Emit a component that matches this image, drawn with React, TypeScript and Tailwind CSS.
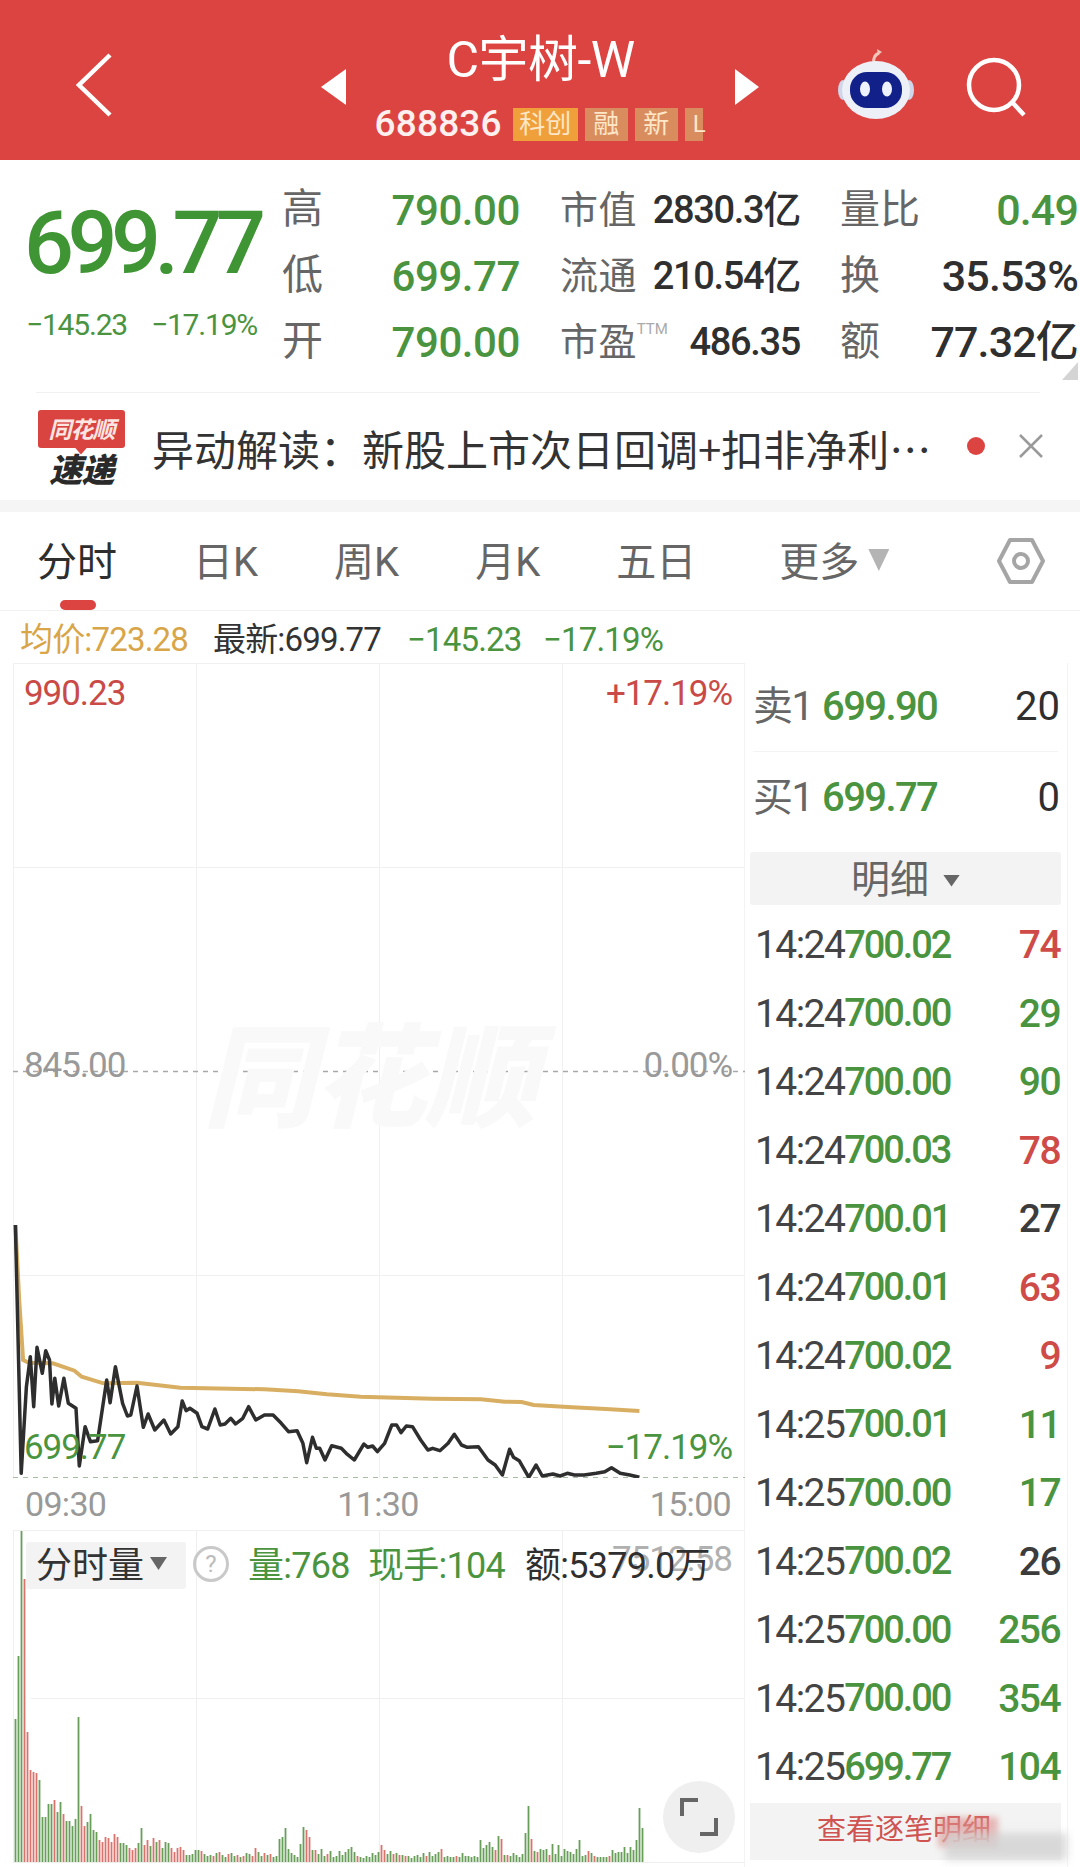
const NUM = "font-['Roboto','Noto_Sans_CJK_SC',sans-serif]";

const blackLine = [
  [32, 75], [44, 820], [55, 560], [63, 470], [70, 620], [77, 442], [88, 520], [95, 452], [103, 480], [108, 612],
  [114, 535], [122, 618], [133, 535], [142, 610], [158, 625], [165, 798], [177, 680], [188, 725], [203, 722],
  [222, 540], [229, 608], [240, 500], [255, 610], [265, 648], [272, 645], [285, 558], [298, 682], [308, 642],
  [322, 690], [341, 660], [355, 702], [370, 680], [379, 603], [387, 632], [395, 625], [410, 640], [420, 680],
  [432, 687], [447, 627], [458, 675], [468, 672], [480, 655], [490, 672], [505, 655], [517, 620], [532, 660],
  [550, 645], [568, 645], [585, 670], [600, 695], [618, 692], [630, 730], [638, 788], [650, 712], [658, 745],
  [665, 745], [676, 780], [690, 737], [710, 745], [720, 760], [737, 780], [757, 732], [765, 742], [775, 738],
  [785, 755], [800, 730], [815, 675], [825, 675], [834, 698], [845, 678], [858, 680], [875, 720], [890, 750],
  [900, 745], [915, 752], [932, 730], [945, 703], [960, 735], [972, 742], [995, 740], [1015, 780], [1030, 795],
  [1045, 825], [1060, 748], [1068, 772], [1080, 782], [1100, 832], [1115, 795], [1128, 828], [1150, 822],
  [1165, 828], [1180, 820], [1195, 825], [1215, 825], [1240, 820], [1258, 815], [1272, 803], [1290, 820],
  [1310, 825], [1330, 832],
];

const goldLine = [
  [32, 75], [40, 300], [48, 480], [60, 488], [110, 490], [155, 512], [170, 530], [215, 550], [285, 548], [375, 563],
  [550, 568], [620, 574], [680, 583], [750, 590], [900, 596], [1000, 598], [1050, 605], [1085, 606], [1110, 615],
  [1190, 622], [1260, 627], [1330, 633],
];

// traced from the crop: x / 2.08, y / 3 + 1200, then moved into the chart box
const toPoints = (line: number[][]) =>
  line.map(([x, y]) => `${(x / 2.08 - 13).toFixed(1)},${(y / 3 + 537).toFixed(1)}`).join(" ");

// negative = red bar
const volumes = [
  143, 206, 336, -283, -130, -92, -90, -89, 82, 45, 45, 58, 58, -62, 50, 60, -48, 41, 41, 36, 43, 145, -56, -36, 40,
  48, 32, 30, -22, -20, -25, -24, -20, -28, -25, 19, 19, 17, -14, -12, -14, 19, 34, -17, -22, 16, -24, 20, -22, 14,
  20, 19, -14, -10, -14, -15, -12, 7, 7, 8, 12, 12, -11, 8, 6, 7, -6, 9, -10, 7, 5, -8, 9, 6, -7, 5, -6, 9, 8, -6,
  -14, 10, 6, -9, 7, -8, 5, 6, 23, 25, 34, 13, 9, 7, 5, 18, 35, -32, -25, 12, -12, 8, 13, 6, -8, 11, 5, 6, 11, 7, 10,
  13, 15, 10, -6, 5, 4, 6, 5, 9, 7, 10, -17, -12, 8, 11, -8, 9, -7, 7, -6, 6, 4, 6, 7, 5, 9, -6, 10, 6, 8, 10, -13, 5,
  6, 5, 5, -6, 5, 9, 6, 6, 5, 6, 5, 22, 14, 17, 20, 15, -12, 26, -23, 7, -7, 6, 9, 7, 5, 8, 29, 56, -23, 11, -10, 13,
  12, 13, -7, 18, 8, 17, 6, 13, 11, 10, 8, 13, 22, 6, 7, -11, 9, -6, 5, 5, 5, 5, -6, 12, 9, 10, 10, 15, 9, 15, 12, 22,
  54, 34,
];

const ticks = [
  ["14:24", "700.02", "74", "r"],
  ["14:24", "700.00", "29", "g"],
  ["14:24", "700.00", "90", "g"],
  ["14:24", "700.03", "78", "r"],
  ["14:24", "700.01", "27", "k"],
  ["14:24", "700.01", "63", "r"],
  ["14:24", "700.02", "9", "r"],
  ["14:25", "700.01", "11", "g"],
  ["14:25", "700.00", "17", "g"],
  ["14:25", "700.02", "26", "k"],
  ["14:25", "700.00", "256", "g"],
  ["14:25", "700.00", "354", "g"],
  ["14:25", "699.77", "104", "g"],
];

const qtyColor: Record<string, string> = {
  r: "text-[#cf4b47]",
  g: "text-[#4a9440]",
  k: "text-[#3c3c3c]",
};

const stats = [
  { label: "高", value: "790.00", label2: "市值", value2: "2830.3亿", label3: "量比", value3: "0.49", green3: true },
  { label: "低", value: "699.77", label2: "流通", value2: "210.54亿", label3: "换", value3: "35.53%" },
  { label: "开", value: "790.00", label2: "市盈", sup: "TTM", value2: "486.35", label3: "额", value3: "77.32亿" },
];

function RobotIcon() {
  return (
    <svg width="78" height="72" viewBox="0 0 78 72" className="mt-[-6px]">
      <path d="M37 16c-1-5 0-9 5-11" fill="none" stroke="#f3c4b8" strokeWidth="3" />
      <path d="M40 1l5 3-4 3z" fill="#f3c4b8" />
      <ellipse cx="6" cy="42" rx="5" ry="10" fill="#cfd6ea" />
      <ellipse cx="72" cy="42" rx="5" ry="10" fill="#cfd6ea" />
      <ellipse cx="39" cy="42" rx="34" ry="29" fill="#eef0f8" />
      <rect x="13" y="24" width="52" height="36" rx="17" fill="#12218a" />
      <ellipse cx="28" cy="41" rx="5" ry="7.5" fill="#eef2ff" />
      <ellipse cx="50" cy="41" rx="5" ry="7.5" fill="#eef2ff" />
    </svg>
  );
}

function SearchIcon() {
  return (
    <svg width="62" height="60" viewBox="0 0 62 60" fill="none" stroke="white" strokeWidth="4.5">
      <circle cx="29" cy="28" r="25" />
      <path d="M47 45l12 13" />
    </svg>
  );
}

function Header() {
  return (
    <div className="h-[160px] shrink-0 bg-[#dc4442] flex items-center text-white">
      <div className="w-[321px] pl-[75px] pt-[10px]">
        <svg width="38" height="64" viewBox="0 0 38 64" fill="none" stroke="white" strokeWidth="4.5">
          <path d="M35 2L4 32l31 30" />
        </svg>
      </div>
      <div className="w-[25px] h-[36px] mt-[14px] bg-white [clip-path:polygon(100%_0,100%_100%,0_50%)]" />
      <div className="w-[389px] flex flex-col items-center pt-[11px]">
        <div className={`${NUM} text-[50px] leading-[62px] tracking-[-0.01em]`}>C宇树-W</div>
        <div className="flex items-center w-[336px] h-[36px] mt-[15px] pl-[2px] overflow-hidden">
          <span className={`${NUM} text-[37px] font-medium tracking-[0.005em] text-[#fdf0ee] mr-[11px]`}>688836</span>
          <span className={`${NUM} w-[65px] h-[33px] shrink-0 flex items-center justify-center bg-[#f0a03a] text-[26px] text-[#fde7c8] mr-[7px]`}>科创</span>
          <span className={`${NUM} w-[43px] h-[33px] shrink-0 flex items-center justify-center bg-[#d98d5e] text-[26px] text-[#fde7c8] mr-[7px]`}>融</span>
          <span className={`${NUM} w-[43px] h-[33px] shrink-0 flex items-center justify-center bg-[#d98d5e] text-[26px] text-[#fde7c8] mr-[7px]`}>新</span>
          <span className={`${NUM} w-[18px] h-[33px] shrink-0 flex items-center bg-[#d98d5e] text-[24px] pl-[8px] text-[#fde7c8]`}>L</span>
        </div>
      </div>
      <div className="w-[24px] h-[36px] mt-[14px] bg-white [clip-path:polygon(0_0,100%_50%,0_100%)]" />
      <div className="ml-[78px] mt-[14px]">
        <RobotIcon />
      </div>
      <div className="ml-[50px] mt-[14px]">
        <SearchIcon />
      </div>
    </div>
  );
}

function Quote() {
  return (
    <div className={`${NUM} relative h-[232px] shrink-0 flex`}>
      <div className="w-[282px] pl-[24px] pt-[38px]">
        <div className="text-[88px] leading-[90px] font-medium text-[#3f9434] tracking-[-0.074em]">699.77</div>
        <div className="flex text-[30px] leading-[36px] mt-[19px] pl-[2px] text-[#4a9440] tracking-[-0.04em]">
          <span className="w-[125px]">−145.23</span>
          <span>−17.19%</span>
        </div>
      </div>
      <div className="flex-1 pt-[17px]">
        {stats.map((s) => (
          <div key={s.label} className="flex items-center h-[66px]">
            <span className="w-[40px] text-[41px] text-[#666]">{s.label}</span>
            <span className="w-[198px] text-[42px] text-right font-medium text-[#4a9440] tracking-[-0.01em]">{s.value}</span>
            <span className="w-[280px] pl-[40px] flex items-center text-[#2f2f2f]">
              <span className="text-[38px] text-[#666] tracking-[0.01em]">{s.label2}</span>
              {s.sup && <span className="text-[15px] text-[#aaa] self-start mt-[4px]">{s.sup}</span>}
              <span className="ml-auto text-[38px] font-medium tracking-[-0.035em]">{s.value2}</span>
            </span>
            <span className="flex-1 pl-[40px] pr-[2px] flex items-center">
              <span className="text-[40px] text-[#666]">{s.label3}</span>
              <span
                className={`ml-auto text-[43px] font-medium tracking-[-0.02em] ${s.green3 ? "text-[#4a9440]" : "text-[#2f2f2f]"}`}
              >
                {s.value3}
              </span>
            </span>
          </div>
        ))}
      </div>
      <div className="absolute right-[2px] bottom-[12px] w-[16px] h-[18px] bg-[#d4d4d4] [clip-path:polygon(100%_0,100%_100%,0_100%)]" />
    </div>
  );
}

function Banner() {
  return (
    <div className="h-[108px] shrink-0 flex items-center relative">
      <div className="absolute top-0 left-[36px] right-[40px] h-[1px] bg-[#f1f1f1]" />
      <div className="w-[87px] ml-[38px] mt-[2px] flex flex-col items-center">
        <div className="relative w-[87px] h-[38px] bg-[#d94440] rounded-[3px] flex items-center justify-center">
          <span className="text-[23px] leading-none font-bold italic text-[#fbe6e2] font-['Noto_Sans_CJK_SC',sans-serif] tracking-[-0.04em]">同花顺</span>
          <div className="absolute bottom-[-7px] left-[36px] w-[14px] h-[8px] bg-[#d94440] [clip-path:polygon(0_0,100%_0,50%_100%)]" />
        </div>
        <span className="text-[33px] leading-[34px] mt-[3px] font-black italic text-[#2a2a2a] font-['Noto_Sans_CJK_SC',sans-serif] tracking-[-0.02em]">速递</span>
      </div>
      <div className="ml-[27px] mt-[3px] w-[786px] text-[42px] leading-[58px] text-[#333] whitespace-nowrap font-['Noto_Sans_CJK_SC',sans-serif]">
        异动解读：新股上市次日回调+扣非净利⋯
      </div>
      <div className="ml-[29px] w-[18px] h-[18px] rounded-full bg-[#dc4442]" />
      <svg width="26" height="26" viewBox="0 0 26 26" className="ml-[33px]" fill="none" stroke="#9a9a9a" strokeWidth="2.5">
        <path d="M2 2l22 22M24 2L2 24" />
      </svg>
    </div>
  );
}

function Tabs() {
  const tabs = [
    { t: "日K", w: "ml-[76px]" },
    { t: "周K", w: "ml-[76px]" },
    { t: "月K", w: "ml-[76px]" },
    { t: "五日", w: "ml-[76px]" },
    { t: "更多", w: "ml-[83px]" },
  ];
  return (
    <div className={`${NUM} relative h-[99px] shrink-0 flex items-center pl-[37px] pt-[4px] border-b border-[#f1f1f1] text-[40px] text-[#666]`}>
      <span className="text-[#2e2e2e]">分时</span>
      {tabs.map((x) => (
        <span key={x.t} className={x.w}>
          {x.t}
        </span>
      ))}
      <div className="w-[21px] h-[22px] ml-[9px] mb-[6px] bg-[#b4b4b4] [clip-path:polygon(0_0,100%_0,50%_100%)]" />
      <svg width="50" height="50" viewBox="0 0 50 50" className="ml-[107px] mb-[4px]" fill="none" stroke="#a5a5a5" strokeWidth="4">
        <path d="M14 4h22l11 21-11 21H14L3 25z" strokeLinejoin="round" />
        <circle cx="25" cy="25" r="7" />
      </svg>
      <div className="absolute left-[60px] bottom-0 w-[36px] h-[10px] rounded-[5px] bg-[#dc4442]" />
    </div>
  );
}

function InfoLine() {
  return (
    <div className={`${NUM} h-[52px] shrink-0 flex items-center pl-[20px] pt-[5px] text-[33px] tracking-[-0.025em]`}>
      <span className="text-[#d8a548] w-[193px]">均价:723.28</span>
      <span className="text-[#333] w-[194px]">最新:699.77</span>
      <span className="text-[#4a9440] w-[136px]">−145.23</span>
      <span className="text-[#4a9440]">−17.19%</span>
    </div>
  );
}

function PriceChart() {
  return (
    <div className={`${NUM} relative h-[815px] text-[35px] tracking-[-0.03em]`}>
      <svg width="732" height="815" viewBox="0 0 732 815" className="absolute inset-0" fill="none">
        <path d="M0 0.5H732M0 204.5H732M0 612.5H732" stroke="#f0f0f0" />
        <path d="M0.5 0V815M183.5 0V815M366.5 0V815M549.5 0V815" stroke="#f0f0f0" />
        <path d="M0 408.5H732" stroke="#a8a8a8" strokeWidth="1.5" strokeDasharray="5 5" />
        <path d="M0 815H732" stroke="#8aa884" strokeWidth="1.5" strokeDasharray="5 5" />
        <polyline points={toPoints(goldLine)} stroke="#d8ae62" strokeWidth="4" />
        <polyline points={toPoints(blackLine)} stroke="#2e2e2e" strokeWidth="3.5" strokeLinejoin="round" />
      </svg>
      <div className="absolute left-[190px] top-[350px] text-[112px] leading-none font-black italic text-[#f9f9f9] font-['Noto_Sans_CJK_SC',sans-serif]">
        同花顺
      </div>
      <span className="absolute left-[11px] top-[5px] text-[#c94a46]">990.23</span>
      <span className="absolute right-[13px] top-[5px] text-[#c94a46]">+17.19%</span>
      <span className="absolute left-[11px] top-[377px] text-[#999]">845.00</span>
      <span className="absolute right-[13px] top-[377px] text-[#999]">0.00%</span>
      <span className="absolute left-[11px] top-[759px] text-[#4a9440]">699.77</span>
      <span className="absolute right-[13px] top-[759px] text-[#4a9440]">−17.19%</span>
    </div>
  );
}

function VolumeChart() {
  return (
    <div className={`${NUM} relative h-[332px] border-t border-[#f0f0f0]`}>
      <svg width="732" height="332" viewBox="0 0 732 332" className="absolute inset-0" fill="none">
        <path d="M0.5 0V332M183.5 0V332M366.5 0V332M549.5 0V332" stroke="#efefef" />
        <path d="M18 167.5H732M0 331.5H732" stroke="#efefef" />
        {volumes.map((v, i) => (
          <rect
            key={i}
            x={1.6 + i * 3}
            y={331 - Math.abs(v)}
            width="1.8"
            height={Math.abs(v)}
            fill={v < 0 ? "#d9736b" : "#679f58"}
          />
        ))}
      </svg>
      <span className="absolute right-[13px] top-[3px] text-[35px] text-[#b0b0b0] tracking-[-0.03em]">7512.58</span>
      <div className="absolute left-[13px] top-[11px] w-[160px] h-[47px] rounded-[3px] bg-[#f3f3f3] flex items-center pl-[10px] text-[36px] text-[#333]">
        分时量
        <div className="w-[17px] h-[13px] ml-[6px] mb-[4px] bg-[#666] [clip-path:polygon(0_0,100%_0,50%_100%)]" />
      </div>
      <div className="absolute left-[180px] top-[15px] w-[36px] h-[36px] rounded-full border-[3px] border-[#c9c9c9] flex items-center justify-center text-[24px] text-[#bbb]">
        ?
      </div>
      <div className="absolute left-[235px] top-[11px] flex items-center h-[47px] text-[36px] tracking-[-0.02em] whitespace-nowrap">
        <span className="w-[120px] text-[#4a9440]">量:768</span>
        <span className="w-[157px] text-[#4a9440]">现手:104</span>
        <span className="text-[#2f2f2f]">额:5379.0万</span>
      </div>
      <div className="absolute left-[650px] top-[250px] w-[72px] h-[72px] rounded-full bg-[#efefef] flex items-center justify-center">
        <svg width="40" height="40" viewBox="0 0 40 40" fill="none" stroke="#666" strokeWidth="4">
          <path d="M3 19V3h16M37 21v16H21" />
        </svg>
      </div>
    </div>
  );
}

function SidePanel() {
  return (
    <div className={`${NUM} w-[324px] ml-[-1px] border-x border-[#f3f3f3] flex flex-col pl-[5px] pr-[6px]`}>
      <div className="h-[89px] flex items-center border-b border-[#f3f3f3] mx-[3px] text-[40px]">
        <span className="w-[69px] text-[#666] tracking-[-0.04em]">卖1</span>
        <span className="font-medium text-[#4a9440] tracking-[-0.04em]">699.90</span>
        <span className="ml-auto mr-[-2px] text-[#2f2f2f]">20</span>
      </div>
      <div className="h-[92px] flex items-center mx-[3px] text-[40px]">
        <span className="w-[69px] text-[#666] tracking-[-0.04em]">买1</span>
        <span className="font-medium text-[#4a9440] tracking-[-0.04em]">699.77</span>
        <span className="ml-auto mr-[-2px] text-[#2f2f2f]">0</span>
      </div>
      <div className="h-[53px] mt-[8px] shrink-0 flex items-center justify-center rounded-[3px] bg-[#f3f3f3] pt-[4px] text-[39px] text-[#666]">
        明细
        <div className="w-[17px] h-[12px] ml-[14px] bg-[#666] [clip-path:polygon(0_0,100%_0,50%_100%)]" />
      </div>
      <div className="mt-[6px]">
        {ticks.map(([time, price, qty, color], i) => (
          <div key={i} className="h-[68.5px] flex items-center pl-[5px] pr-[1px] text-[39px] tracking-[-0.04em]">
            <span className="text-[#444]">{time}</span>
            <span className="text-[38px] text-[#4a9440] font-medium tracking-[-0.055em]">{price}</span>
            <span className={`ml-auto font-medium ${qtyColor[color]}`}>{qty}</span>
          </div>
        ))}
      </div>
      <div className="relative h-[57px] mt-[1px] flex items-center pl-[67px] bg-[#f3f3f3] text-[29px] text-[#cf5350] overflow-visible">
        查看逐笔明细
        <div className="absolute left-[188px] w-[60px] top-[14px] h-[30px] bg-[#dd8f8c] opacity-60 blur-[3px]" />
        <div className="absolute left-[195px] right-[-6px] top-[30px] h-[27px] bg-[#d2d2d2] opacity-80 blur-[4px]" />
      </div>
    </div>
  );
}

export default function App() {
  return (
    <div className="w-[1080px] h-[1867px] overflow-hidden flex flex-col bg-white">
      <Header />
      <Quote />
      <Banner />
      <div className="h-[12px] shrink-0 bg-[#f5f5f5]" />
      <Tabs />
      <InfoLine />
      <div className="flex flex-1">
        <div className="w-[745px] pl-[13px]">
          <PriceChart />
          <div className={`${NUM} h-[52px] flex items-center justify-between pl-[12px] pr-[14px] text-[34px] text-[#999] tracking-[-0.02em]`}>
            <span>09:30</span>
            <span>11:30</span>
            <span>15:00</span>
          </div>
          <VolumeChart />
        </div>
        <SidePanel />
      </div>
    </div>
  );
}
